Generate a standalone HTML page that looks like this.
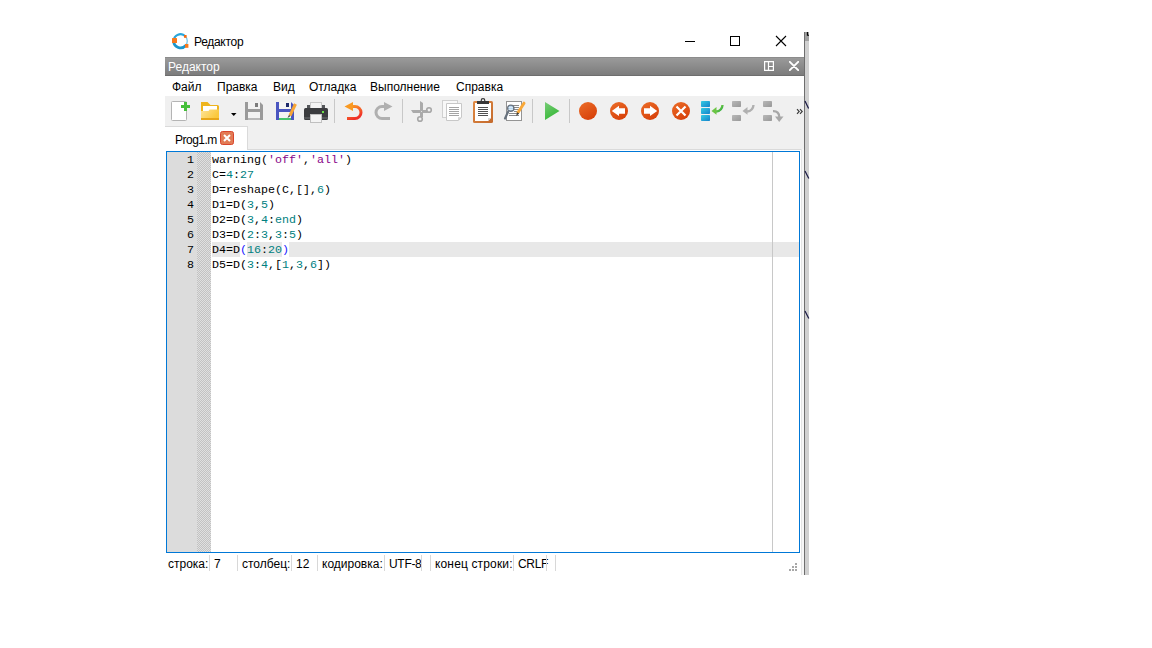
<!DOCTYPE html>
<html><head><meta charset="utf-8">
<style>
*{margin:0;padding:0;box-sizing:border-box}
html,body{width:1152px;height:648px;background:#fff;overflow:hidden;position:relative;font-family:"Liberation Sans",sans-serif;font-size:12px;color:#000}
.a{position:absolute}
.t{position:absolute;white-space:pre;line-height:14px;font-size:12px}
.code{position:absolute;left:212px;white-space:pre;font-family:"Liberation Mono",monospace;font-size:11.67px;line-height:15px;color:#000}
.n{color:#008080}
.s{color:#880488}
.ln{position:absolute;left:167px;width:27px;text-align:right;font-family:"Liberation Mono",monospace;font-size:11.67px;line-height:15px;color:#000}
.sep{position:absolute;top:555px;width:1px;height:16px;background:#d8d8d8}
</style></head><body>

<!-- title bar -->
<svg class="a" style="left:168px;top:30px" width="24" height="22" viewBox="0 0 24 22">
  <circle cx="12.5" cy="11" r="6.8" stroke="#74c8ec" stroke-width="1.3" fill="none"/>
  <path d="M5.7 11A6.8 6.8 0 0 1 17.47 6.36" stroke="#2aa6da" stroke-width="2.1" fill="none"/>
  <path d="M5.7 11A6.8 6.8 0 0 0 17.78 15.28" stroke="#1b96cc" stroke-width="2.7" fill="none"/>
  <rect x="4" y="8" width="5" height="5" rx="0.5" fill="#f7781c"/>
  <rect x="16" y="5" width="2.6" height="2.8" fill="#f76a10"/>
  <rect x="17" y="14" width="3.4" height="3.8" fill="#f7781c"/>
</svg>
<div class="t" style="left:194px;top:35px;letter-spacing:-0.3px">Редактор</div>
<div class="a" style="left:685px;top:41px;width:10px;height:1px;background:#000"></div>
<div class="a" style="left:730px;top:36px;width:10px;height:10px;border:1px solid #000"></div>
<svg class="a" style="left:775px;top:35px" width="12" height="12" viewBox="0 0 12 12"><path d="M1 1L11 11M11 1L1 11" stroke="#000" stroke-width="1.1"/></svg>

<!-- right strip -->
<div class="a" style="left:804px;top:32px;width:1px;height:543px;background:#6e6e6e"></div>
<div class="a" style="left:805px;top:32px;width:4px;height:9px;background:#a0a0a0"></div>
<div class="a" style="left:805px;top:41px;width:4px;height:534px;background:#d0d0d0"></div>

<!-- dock title -->
<div class="a" style="left:165px;top:57px;width:639px;height:19px;background:linear-gradient(#8c8c8c 0,#8c8c8c 1px,#9a9a9a 1px,#7c7c7c 18px,#6e6e6e 18px)"></div>
<div class="t" style="left:168px;top:60px;color:#fff">Редактор</div>
<svg class="a" style="left:764px;top:61px" width="10" height="10" viewBox="0 0 10 10"><path d="M0.6 0.6H9.4V9.4H0.6Z M4.5 0.5V9.5 M4.5 5.5H9.5" stroke="#fff" fill="none" stroke-width="1.2"/></svg>
<svg class="a" style="left:789px;top:61px" width="10" height="10" viewBox="0 0 10 10"><path d="M0.8 0.8L9.2 9.2M9.2 0.8L0.8 9.2" stroke="#fff" stroke-width="1.9" stroke-linecap="round"/></svg>

<!-- menu -->
<div class="t" style="left:172px;top:80px">Файл</div>
<div class="t" style="left:217px;top:80px">Правка</div>
<div class="t" style="left:273px;top:80px">Вид</div>
<div class="t" style="left:309px;top:80px">Отладка</div>
<div class="t" style="left:370px;top:80px">Выполнение</div>
<div class="t" style="left:456px;top:80px">Справка</div>

<!-- toolbar + tabbar bg -->
<div class="a" style="left:165px;top:96px;width:639px;height:55px;background:#f0f0f0"></div>

<svg class="a" style="left:165px;top:96px" width="639" height="30" viewBox="165 96 639 30">
<defs>
  <linearGradient id="gUndo" x1="0" y1="0" x2="0.6" y2="1"><stop offset="0" stop-color="#fba524"/><stop offset="1" stop-color="#f0302a"/></linearGradient>
  <linearGradient id="gRun" x1="0" y1="0" x2="0.5" y2="1"><stop offset="0" stop-color="#78cc78"/><stop offset="1" stop-color="#36b836"/></linearGradient>
  <linearGradient id="gRed" x1="0.2" y1="0" x2="0.8" y2="1"><stop offset="0" stop-color="#ea6a26"/><stop offset="1" stop-color="#d63e08"/></linearGradient>
  <linearGradient id="gBlue" x1="0" y1="0" x2="1" y2="1"><stop offset="0" stop-color="#36cce2"/><stop offset="1" stop-color="#1482cc"/></linearGradient>
  <linearGradient id="gGreen" x1="0" y1="0" x2="1" y2="1"><stop offset="0" stop-color="#98d448"/><stop offset="1" stop-color="#28ac40"/></linearGradient>
  <linearGradient id="gGray" x1="0" y1="0" x2="1" y2="1"><stop offset="0" stop-color="#b8b8b8"/><stop offset="1" stop-color="#989898"/></linearGradient>
  <linearGradient id="gFold" x1="0" y1="0" x2="1" y2="0.4"><stop offset="0" stop-color="#fde49a"/><stop offset="1" stop-color="#fbc83c"/></linearGradient>
  <linearGradient id="gClip" x1="0" y1="0" x2="1" y2="1"><stop offset="0" stop-color="#e08a44"/><stop offset="1" stop-color="#c46a2c"/></linearGradient>
</defs>
<!-- new -->
<rect x="171.5" y="101.5" width="15" height="19" rx="1" fill="#fff" stroke="#b4b4b4"/>
<rect x="181" y="105" width="9" height="3" fill="#46bf3a"/>
<rect x="184" y="102" width="3" height="9" fill="#46bf3a"/>
<!-- open -->
<path d="M201 102H207.5L210.5 105H217.5Q219 105 219 106.5V120H201Z" fill="#eeb41e"/>
<rect x="203" y="106" width="14" height="5" fill="#fff"/>
<path d="M201 111H208.5L209.5 109.5H219V118H201Z" fill="url(#gFold)"/>
<rect x="201" y="118" width="18" height="2" fill="#e8a61a"/>
<path d="M231 113H236.5L233.75 116Z" fill="#000"/>
<!-- save gray -->
<path d="M245 102H260L263 105V120H245Z" fill="#9a9a9a"/>
<rect x="248" y="102" width="12" height="7" fill="#f2f2f2"/>
<rect x="255" y="103" width="3" height="4" fill="#7c7c7c"/>
<rect x="248" y="112" width="12" height="6" fill="#f2f2f2"/>
<rect x="248" y="118" width="12" height="2" fill="#b8b8b8"/>
<!-- save as -->
<path d="M276 102H291L294 105V120H276Z" fill="#4a56c0"/>
<rect x="279" y="102" width="12" height="7" fill="#f4f4f4"/>
<rect x="286" y="103" width="3" height="4" fill="#1e2a6c"/>
<rect x="279" y="112" width="12" height="6" fill="#f4f4f4"/>
<rect x="279" y="118" width="12" height="2" fill="#46c46c"/>
<path d="M290 115.5L295.5 104" stroke="#f7a535" stroke-width="3"/>
<path d="M287.5 118L289 115L290.5 116Z" fill="#333"/>
<!-- print -->
<rect x="307" y="105" width="3" height="3" fill="#55575b"/>
<rect x="322" y="105" width="3" height="3" fill="#55575b"/>
<rect x="310.5" y="102.5" width="11" height="6" fill="#f4f4f4" stroke="#c8c8c8"/>
<rect x="304" y="108" width="24" height="12" rx="1.5" fill="#3b3c3f"/>
<rect x="304" y="117" width="24" height="2" fill="#55575a"/>
<rect x="322" y="111" width="2" height="2" fill="#6be048"/>
<rect x="310.5" y="114.5" width="11" height="8" fill="#f4f4f4" stroke="#c0c0c0"/>
<!-- sep -->
<rect x="334" y="99" width="1" height="24" fill="#c8c8c8"/>
<!-- undo -->
<path d="M347 118.5H355A6 6 0 0 0 355 106.5H352" stroke="url(#gUndo)" stroke-width="3" fill="none"/>
<path d="M344.5 106.5L353 102V111Z" fill="#f99a22"/>
<!-- redo -->
<path d="M390 118.5H382A6 6 0 0 1 382 106.5H385" stroke="#b0b0b0" stroke-width="3" fill="none"/>
<path d="M392.5 106.5L384 102V111Z" fill="#b0b0b0"/>
<rect x="402" y="99" width="1" height="24" fill="#c8c8c8"/>
<!-- cut -->
<path d="M420 101L423 103V117L420 117Z" fill="#ababab"/>
<path d="M411 110H427.5V113H413Z" fill="#ababab"/>
<circle cx="429" cy="110" r="2.3" stroke="#a8a8a8" stroke-width="1.6" fill="none"/>
<circle cx="420" cy="119" r="2.3" stroke="#a8a8a8" stroke-width="1.6" fill="none"/>
<rect x="421" y="111" width="1" height="1" fill="#e0e0e0"/>
<!-- copy -->
<rect x="442.5" y="100.5" width="15" height="17" fill="#f8f8f8" stroke="#d0d0d0"/>
<path d="M446.5 103.5H461.5V117.5L458.5 120.5H446.5Z" fill="#fff" stroke="#c8c8c8"/>
<path d="M449 107.5H459M449 109.5H459M449 111.5H459M449 113.5H459M449 115.5H459" stroke="#a4a4a4" stroke-width="1"/>
<path d="M458 121L461.8 117.2H458Z" fill="#d4d4d4"/>
<!-- paste -->
<rect x="473" y="101" width="20" height="22" rx="1.5" fill="url(#gClip)"/>
<path d="M475 103H491V118L488 121H475Z" fill="#fff"/>
<path d="M488 121L491 118H488Z" fill="#d8d8d8"/>
<rect x="477" y="101" width="12" height="3" fill="#383838"/>
<circle cx="483" cy="100.5" r="1.8" fill="none" stroke="#383838" stroke-width="1.2"/>
<path d="M478 107.5H488M478 109.5H488M478 111.5H488M478 113.5H488M478 115.5H488" stroke="#505050" stroke-width="1"/>
<!-- find -->
<rect x="506.5" y="101.5" width="15" height="19" fill="#fff" stroke="#949494"/>
<path d="M512 105.5H519M514 107.5H519M514 109.5H519M514 111.5H517M509 113.5H519M509 115.5H519" stroke="#8a8a8a" stroke-width="1"/>
<path d="M508 112L505 118.5" stroke="#68727e" stroke-width="2.2" stroke-linecap="round"/>
<circle cx="510.8" cy="108.2" r="3.1" fill="#b8d8f2" stroke="#6a7480" stroke-width="1.4"/>
<path d="M508.5 107.5H513M508.5 109.5H513" stroke="#eaf4fc" stroke-width="0.7"/>
<path d="M518 112.5L524 103.2" stroke="#f9a838" stroke-width="3" stroke-linecap="round"/>
<path d="M516.2 116L517 112.2L519.2 113.6Z" fill="#3c3c3c"/>
<rect x="532" y="99" width="1" height="24" fill="#c8c8c8"/>
<!-- run -->
<path d="M545 102L559.5 111L545 120Z" fill="url(#gRun)"/>
<rect x="569" y="99" width="1" height="24" fill="#c8c8c8"/>
<!-- breakpoint -->
<circle cx="588" cy="111" r="9" fill="url(#gRed)"/>
<circle cx="619" cy="111" r="9" fill="url(#gRed)"/>
<path d="M611.8 111L619 105.8V108.2H625V113.8H619V116Z" fill="#fff"/>
<circle cx="650" cy="111" r="9" fill="url(#gRed)"/>
<path d="M657.2 111L650 105.8V108.2H644V113.8H650V116Z" fill="#fff"/>
<circle cx="681" cy="111" r="9" fill="url(#gRed)"/>
<path d="M676.5 106.5L685.5 115.5M685.5 106.5L676.5 115.5" stroke="#fff" stroke-width="2.2"/>
<!-- step -->
<rect x="701" y="101" width="9" height="6" rx="0.8" fill="url(#gBlue)"/>
<rect x="701" y="108" width="9" height="6" rx="0.8" fill="url(#gBlue)"/>
<rect x="701" y="115" width="9" height="6" rx="0.8" fill="url(#gBlue)"/>
<path d="M716 111.5Q722 111 722.5 105" stroke="url(#gGreen)" stroke-width="2.4" fill="none"/>
<path d="M711.5 111L716.5 107V114.8Z" fill="#6cc444"/>
<!-- step in -->
<rect x="732" y="101" width="9" height="6" rx="0.8" fill="url(#gGray)"/>
<rect x="732" y="115" width="9" height="6" rx="0.8" fill="url(#gGray)"/>
<path d="M747 111.5Q753 111 753.5 105" stroke="#b0b0b0" stroke-width="2.4" fill="none"/>
<path d="M742.5 111L747.5 107V114.8Z" fill="#b0b0b0"/>
<!-- step out -->
<rect x="763" y="101" width="9" height="6" rx="0.8" fill="url(#gGray)"/>
<rect x="763" y="115" width="9" height="6" rx="0.8" fill="url(#gGray)"/>
<path d="M773 111.2Q779 111 779.3 117" stroke="#a8a8a8" stroke-width="2.2" fill="none"/>
<path d="M775 116.5H783.5L779.2 122Z" fill="#a8a8a8"/>
<!-- chevrons -->
<path d="M797 109.2L799.2 111.5L797 113.8M800 109.2L802.2 111.5L800 113.8" stroke="#3a3a3a" stroke-width="1.15" fill="none"/>
</svg>

<!-- tab -->
<div class="a" style="left:165px;top:126px;width:83px;height:25px;background:#fff;border-top:1px solid #dadada;border-right:1px solid #dadada"></div>
<div class="t" style="left:175px;top:133px;letter-spacing:-0.5px">Prog1.m</div>
<svg class="a" style="left:220px;top:131px" width="14" height="14" viewBox="0 0 14 14"><rect x="0.5" y="0.5" width="13" height="13" rx="2" fill="#e27b55" stroke="#d9452c"/><path d="M4 4L10 10M10 4L4 10" stroke="#fff" stroke-width="2"/></svg>

<!-- editor -->
<div class="a" style="left:165px;top:149px;width:637px;height:426px;background:#fff"></div>
<div class="a" style="left:247px;top:149px;width:555px;height:1px;background:#dadada"></div>
<div class="a" style="left:801px;top:149px;width:1px;height:426px;background:#e4e4e4"></div>
<div class="a" style="left:802px;top:149px;width:2px;height:426px;background:#f6f6f6"></div>
<div class="a" style="left:166px;top:151px;width:634px;height:402px;border:1px solid #0078d7;background:#fff"></div>
<div class="a" style="left:167px;top:152px;width:30px;height:400px;background:#dcdcdc"></div>
<div class="a" style="left:197px;top:152px;width:14px;height:400px;background-color:#e0e0e0;background-image:linear-gradient(45deg,#c2c2c2 25%,transparent 25%,transparent 75%,#c2c2c2 75%),linear-gradient(45deg,#c2c2c2 25%,transparent 25%,transparent 75%,#c2c2c2 75%);background-size:2px 2px;background-position:0 1px,1px 0"></div>
<div class="a" style="left:212px;top:242px;width:587px;height:15px;background:#e8e8e8"></div>
<div class="a" style="left:240px;top:242px;width:7px;height:15px;background:#fff"></div>
<div class="a" style="left:282px;top:242px;width:7px;height:15px;background:#fff"></div>
<div class="a" style="left:772px;top:152px;width:1px;height:400px;background:#c8c8c8"></div>

<div class="ln" style="top:153px">1</div>
<div class="ln" style="top:168px">2</div>
<div class="ln" style="top:183px">3</div>
<div class="ln" style="top:198px">4</div>
<div class="ln" style="top:213px">5</div>
<div class="ln" style="top:228px">6</div>
<div class="ln" style="top:243px">7</div>
<div class="ln" style="top:258px">8</div>

<div class="code" style="top:153px">warning(<span class="s">'off'</span>,<span class="s">'all'</span>)</div>
<div class="code" style="top:168px">C=<span class="n">4</span>:<span class="n">27</span></div>
<div class="code" style="top:183px">D=reshape(C,[],<span class="n">6</span>)</div>
<div class="code" style="top:198px">D1=D(<span class="n">3</span>,<span class="n">5</span>)</div>
<div class="code" style="top:213px">D2=D(<span class="n">3</span>,<span class="n">4</span>:<span class="n">end</span>)</div>
<div class="code" style="top:228px">D3=D(<span class="n">2</span>:<span class="n">3</span>,<span class="n">3</span>:<span class="n">5</span>)</div>
<div class="code" style="top:243px">D4=D<span style="color:#2020ff">(</span><span class="n">16</span>:<span class="n">20</span><span style="color:#2020ff">)</span></div>
<div class="code" style="top:258px">D5=D(<span class="n">3</span>:<span class="n">4</span>,[<span class="n">1</span>,<span class="n">3</span>,<span class="n">6</span>])</div>

<!-- status bar -->
<div class="t" style="left:168px;top:557px">строка:</div>
<div class="sep" style="left:209px"></div>
<div class="t" style="left:214px;top:557px">7</div>
<div class="sep" style="left:237px"></div>
<div class="t" style="left:242px;top:557px">столбец:</div>
<div class="sep" style="left:291px"></div>
<div class="t" style="left:296px;top:557px">12</div>
<div class="sep" style="left:317px"></div>
<div class="t" style="left:322px;top:557px">кодировка:</div>
<div class="sep" style="left:384px"></div>
<div class="t" style="left:389px;top:557px;letter-spacing:-0.3px">UTF-8</div>
<div class="sep" style="left:421px"></div>
<div class="sep" style="left:430px"></div>
<div class="t" style="left:435px;top:557px;letter-spacing:0.15px">конец строки:</div>
<div class="sep" style="left:513px"></div>
<div class="t" style="left:518px;top:557px;letter-spacing:-0.3px">CRLF</div>
<div class="sep" style="left:546px"></div>
<div class="sep" style="left:555px"></div>

<svg class="a" style="left:800px;top:96px" width="12" height="230" viewBox="800 96 12 230">
<path d="M805 101L808.6 108.6M805 171L808.8 178.5M805 311L808.8 318.5" stroke="#1c1c48" stroke-width="1.25"/>
</svg>
<svg class="a" style="left:786px;top:560px" width="14" height="14" viewBox="786 560 14 14" fill="#a8a8a8">
<rect x="795" y="563" width="2" height="2"/><rect x="792" y="566" width="2" height="2"/><rect x="795" y="566" width="2" height="2"/>
<rect x="789" y="569" width="2" height="2"/><rect x="792" y="569" width="2" height="2"/><rect x="795" y="569" width="2" height="2"/>
</svg>
<svg class="a" style="left:804px;top:30px" width="6" height="8" viewBox="804 30 6 8"><path d="M807.4 32V35.3H809" stroke="#000" stroke-width="1.1" fill="none"/></svg>
</body></html>
